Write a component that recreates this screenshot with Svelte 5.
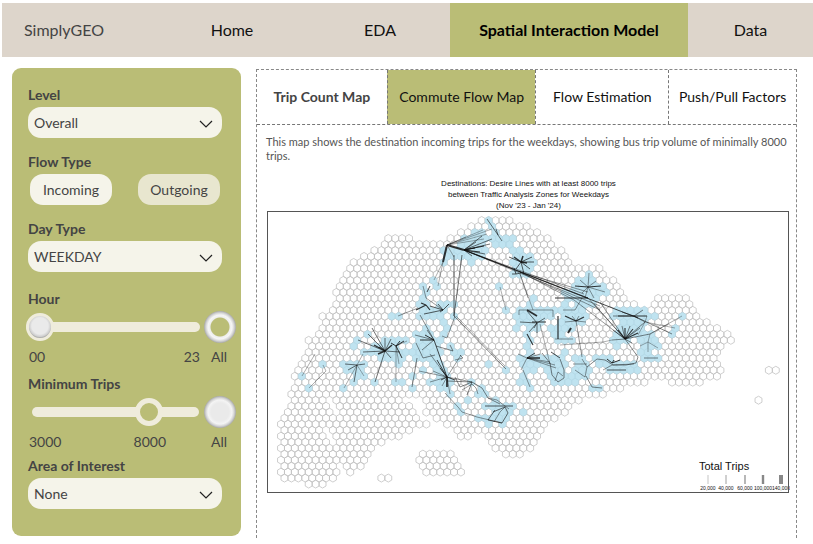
<script>
  const pitch = 6.92;
  const rowGap = 5.99;
  const originX = 481.7;
  const originY = 220.5;

  // For each row: start and end of every run of zones, in map units.
  const zones = [
    [482, 509], [471, 527], [461, 537], [389, 409, 451, 547], [385, 551], [375, 558],
    [365, 565], [354, 568], [351, 599], [347, 603], [344, 613], [340, 616], [337, 620],
    [340, 627, 656, 685], [337, 637, 653, 689], [333, 692], [323, 696], [326, 706],
    [323, 716], [319, 727], [309, 730], [312, 720], [309, 716], [306, 713], [302, 716],
    [299, 720, 768, 775], [295, 716], [299, 644, 671, 699], [295, 620], [292, 603],
    [295, 323, 337, 400, 427, 579, 757, 757], [292, 326, 340, 406, 430, 568],
    [289, 330, 344, 413, 427, 565], [285, 333, 340, 416, 437, 554], [282, 423, 447, 544],
    [285, 320, 333, 410, 457, 540], [282, 323, 333, 402, 461, 468, 489, 537],
    [285, 326, 337, 382, 492, 534], [282, 326, 337, 372, 496, 530],
    [285, 330, 340, 368, 423, 451, 506, 520], [282, 333, 344, 364, 420, 455],
    [285, 330, 344, 361, 423, 458], [282, 337, 351, 351, 427, 461],
    [285, 333, 381, 389], [309, 323]
  ];
  const busy = [
    [489, 489], [492, 492], [475, 482, 493, 496], [464, 485, 489, 503, 513, 513],
    [460, 482, 494, 507, 510, 510], [447, 485, 513, 520], [450, 483, 513, 530],
    [444, 444, 471, 471, 513, 533], [513, 527], [513, 527, 589, 589],
    [433, 433, 578, 593], [423, 423, 437, 437, 499, 499, 575, 603],
    [423, 427, 563, 570, 580, 606], [423, 423, 533, 533, 565, 593],
    [420, 427, 442, 454, 530, 530, 568, 568, 578, 593],
    [420, 447, 506, 506, 520, 540, 547, 582, 617, 643],
    [392, 399, 419, 437, 454, 454, 516, 550, 562, 585, 613, 655, 682, 682],
    [444, 444, 520, 543, 563, 583, 627, 647],
    [428, 428, 447, 447, 516, 516, 527, 537, 553, 570, 620, 643, 675, 675],
    [368, 368, 416, 430, 443, 443, 530, 530, 553, 563, 617, 650, 672, 672],
    [358, 358, 383, 407, 419, 437, 530, 533, 557, 572, 612, 630, 640, 655],
    [355, 355, 373, 397, 416, 437, 450, 450, 530, 530, 620, 620, 643, 658],
    [365, 403, 413, 440, 454, 461, 530, 530, 563, 563, 640, 647],
    [378, 400, 413, 437, 460, 460, 520, 540, 550, 562, 573, 582, 595, 610, 645, 658],
    [323, 323, 343, 365, 399, 399, 433, 440, 488, 488, 523, 530, 537, 563, 578, 587, 600, 633],
    [347, 360, 423, 423, 437, 443, 506, 506, 530, 535, 547, 562, 573, 588, 607, 637],
    [302, 302, 358, 365, 413, 413, 443, 450, 523, 523, 552, 563, 575, 583],
    [354, 354, 375, 375, 396, 403, 430, 430, 440, 450, 470, 470, 520, 527, 553, 560, 567, 575],
    [309, 309, 344, 344, 413, 413, 440, 447, 482, 482, 530, 530, 592, 599],
    [450, 450, 478, 485], [468, 468, 495, 495], [458, 458, 485, 513],
    [461, 461, 495, 510, 523, 523], [478, 478, 488, 507], [488, 488, 502, 502]
  ];

  function hexes(rows) {
    let d = '';
    rows.forEach((runs, r) => {
      const shift = r % 2 ? pitch / 2 : 0;
      const y = originY + r * rowGap;
      for (let i = 0; i < runs.length; i += 2) {
        const a = Math.round((runs[i] - originX - shift) / pitch);
        const b = Math.round((runs[i + 1] - originX - shift) / pitch);
        for (let k = a; k <= b; k++) {
          const x = originX + shift + k * pitch;
          d += `M${x.toFixed(2)} ${(y - 4).toFixed(2)}l3.46 2v4l-3.46 2l-3.46 -2v-4z`;
        }
      }
    });
    return d;
  }

  // Desire lines that fan out: hub x, hub y, stroke width, then the far ends.
  const fans = [
    [464, 250, 2, [447, 245]],
    [447, 245, 2, [443, 262]],
    [464, 250, 1, [475, 248, 484, 246, 480, 252]],
    [464, 250, 0.7, [492, 239, 490, 244, 485, 254, 482, 236, 472, 256, 476, 242]],
    [447, 245, 0.4, [466, 237, 483, 230, 492, 229, 487, 234, 454, 257, 484, 239]],
    [498, 235, 0.7, [487, 219, 502, 241, 496, 229]],
    [521, 262, 1.5, [514, 257, 523, 256, 527, 263]],
    [521, 262, 0.8, [534, 262, 516, 269, 530, 269, 524, 274, 509, 257, 532, 257]],
    [516, 274, 0.8, [514, 268, 521, 273, 512, 274]],
    [464, 250, 0.9, [588, 298, 638, 318]],
    [464, 250, 0.5, [600, 306, 584, 294]],
    [625, 339, 0.5, [588, 298, 594, 304, 574, 300, 600, 302]],
    [520, 272, 0.5, [588, 292, 600, 310, 574, 300]],
    [520, 274, 0.4, [528, 298, 533, 310]],
    [454, 316, 0.7, [454, 255, 462, 255]],
    [454, 316, 0.6, [506, 369]],
    [456, 316, 0.4, [505, 366]],
    [443, 262, 0.4, [434, 280, 438, 286]],
    [426, 305, 1.2, [416, 310, 421, 303, 430, 310]],
    [443, 310, 0.8, [430, 306, 438, 304, 449, 304, 424, 314, 440, 312]],
    [426, 298, 0.5, [423, 286, 443, 310]],
    [427, 292, 0.9, [430, 286]],
    [398, 316, 0.5, [418, 308]],
    [385, 351, 1.4, [374, 345, 379, 347, 392, 345, 378, 354]],
    [385, 351, 0.7, [358, 340, 375, 382, 385, 338, 391, 339, 368, 334, 363, 352, 400, 352, 391, 358, 372, 328]],
    [396, 346, 1, [404, 341, 391, 343, 402, 358, 400, 341]],
    [396, 346, 0.4, [396, 382, 399, 364, 407, 341]],
    [357, 365, 0.7, [345, 364, 365, 364, 348, 370, 354, 382]],
    [357, 365, 0.4, [344, 388, 364, 376, 363, 354]],
    [447, 377, 1.8, [447, 387]],
    [447, 377, 0.9, [434, 340, 437, 360, 441, 380, 440, 368, 455, 380]],
    [447, 377, 0.5, [461, 355, 450, 394, 430, 382, 433, 371, 442, 386, 430, 354, 472, 382, 419, 371]],
    [434, 340, 1, [420, 340, 425, 335]],
    [434, 340, 0.6, [420, 315, 427, 330, 415, 335, 422, 350]],
    [527, 310, 1.6, [537, 316]],
    [537, 322, 1.2, [532, 322, 546, 322]],
    [537, 323, 0.7, [520, 322, 529, 332, 537, 333, 527, 311, 545, 318, 534, 328]],
    [533, 345, 1.1, [527, 334]],
    [527, 358, 1.6, [540, 358]],
    [527, 358, 0.9, [535, 353]],
    [527, 358, 0.5, [521, 370, 555, 365, 550, 362, 556, 368, 518, 354, 540, 354]],
    [558, 339, 1.2, [558, 316]],
    [568, 333, 2, [571, 328]],
    [576, 321, 1.2, [565, 316, 584, 317]],
    [576, 321, 0.5, [582, 357, 565, 322, 586, 322, 579, 316, 572, 316]],
    [588, 287, 1, [575, 286, 601, 286]],
    [588, 287, 0.5, [589, 273, 580, 280, 596, 281, 605, 292, 582, 293, 585, 298, 594, 298]],
    [588, 298, 1, [555, 298]],
    [625, 339, 1.1, [618, 330, 625, 328, 633, 329, 638, 333]],
    [625, 339, 0.6, [612, 340, 613, 330, 622, 326, 630, 326, 650, 334, 638, 357, 640, 328, 645, 322, 632, 343]],
    [634, 316, 1, [618, 316, 647, 316]],
    [634, 316, 0.6, [622, 312, 645, 322, 643, 310, 672, 334, 613, 316]],
    [645, 322, 0.4, [647, 316, 675, 328, 638, 335]],
    [650, 334, 0.4, [682, 316, 668, 324]],
    [612, 363, 1, [607, 359, 614, 360, 620, 360]],
    [607, 370, 0.8, [626, 370]],
    [648, 342, 0.4, [650, 334, 648, 352, 640, 346, 658, 348]]
  ];

  // Desire lines that run on from zone to zone: stroke width, then the points.
  const chains = [
    [0.5, '455 316 447 338 442 336'],
    [0.6, '416 343 423 358 435 355'],
    [0.6, '436 346 453 351 450 345'],
    [0.6, '417 358 415 370 412 387'],
    [0.5, '460 355 463 358 455 360'],
    [0.6, '447 381 472 382 460 387 455 377'],
    [0.6, '467 395 472 382 482 388 488 398 500 404'],
    [0.5, '462 390 472 384 476 388 478 394'],
    [0.5, '445 393 458 407 462 412 477 417 502 423'],
    [0.8, '485 406 513 406'],
    [0.7, '493 412 505 407 508 413 502 423 488 420 495 410'],
    [0.5, '505 407 500 412 494 422'],
    [0.5, '488 398 497 400 509 409'],
    [0.4, '500 287 506 310'],
    [0.5, '519 315 519 310 553 310 553 317'],
    [0.5, '555 339 573 339'],
    [0.5, '563 310 575 310 582 298'],
    [0.4, '560 345 603 342 612 340'],
    [0.4, '540 324 550 364'],
    [0.9, '551 352 560 358'],
    [0.6, '542 353 550 363 552 375 558 382 564 378 564 370 560 359'],
    [0.5, '555 381 558 372 563 376'],
    [0.5, '523 370 530 387'],
    [0.5, '582 359 587 367 585 377 575 370'],
    [0.6, '586 376 592 387 602 388'],
    [0.6, '587 367 597 359 605 360 613 365 626 365 636 363 638 357'],
    [0.5, '573 364 587 364'],
    [0.5, '603 370 612 365 634 364'],
    [0.6, '644 358 658 358'],
    [0.4, '302 376 315 354'],
    [0.4, '309 388 326 371 323 365']
  ];

  const lines = [
    ...fans.map(([x, y, w, ends]) => {
      let d = '';
      for (let i = 0; i < ends.length; i += 2) d += `M${x} ${y}L${ends[i]} ${ends[i + 1]}`;
      return { d, w };
    }),
    ...chains.map(([w, points]) => ({ d: 'M' + points, w }))
  ];

  const legend = [
    { x: 708, w: 0.5, label: '20,000' },
    { x: 726, w: 0.8, label: '40,000' },
    { x: 745, w: 1.2, label: '60,000' },
    { x: 763, w: 2.4, label: '100,000' },
    { x: 781, w: 4, label: '140,000' }
  ];

  let hour = $state(0);
  let trips = $state(8000);
  let direction = $state('Incoming');
</script>

{#snippet chevron()}
  <svg class="chevron" viewBox="0 0 14 8" aria-hidden="true"><path d="M1 1l6 6 6-6" /></svg>
{/snippet}

<div class="page">
  <header>
    <a class="brand" href="#top">SimplyGEO</a>
    <a href="#home">Home</a>
    <a href="#eda">EDA</a>
    <a class="current" href="#model">Spatial Interaction Model</a>
    <a href="#data">Data</a>
  </header>

  <div class="body">
    <aside>
      <div class="field">
        <label for="level">Level</label>
        <div class="pick">
          <select id="level"><option>Overall</option></select>
          {@render chevron()}
        </div>
      </div>
      <div class="field" role="group" aria-labelledby="flow">
        <span class="label" id="flow">Flow Type</span>
        <div class="choices">
          {#each ['Incoming', 'Outgoing'] as name}
            <button class:on={direction === name} onclick={() => (direction = name)}>{name}</button>
          {/each}
        </div>
      </div>
      <div class="field">
        <label for="day">Day Type</label>
        <div class="pick">
          <select id="day"><option>WEEKDAY</option></select>
          {@render chevron()}
        </div>
      </div>
      <div class="field hour">
        <label for="hour">Hour</label>
        <div class="range">
          <input id="hour" class="ball" type="range" min="0" max="23" bind:value={hour} />
          <input id="all-hours" type="checkbox" />
        </div>
        <div class="scale">
          <span>00</span><span>23</span><label for="all-hours">All</label>
        </div>
      </div>
      <div class="field trips">
        <label for="trips">Minimum Trips</label>
        <div class="range">
          <input id="trips" class="ring" type="range" min="3000" max="9750" step="50" bind:value={trips} />
          <input id="all-trips" type="checkbox" checked />
        </div>
        <div class="scale">
          <span>3000</span><span class="value">{trips}</span><label for="all-trips">All</label>
        </div>
      </div>
      <div class="field area">
        <label for="area">Area of Interest</label>
        <div class="pick">
          <select id="area"><option>None</option></select>
          {@render chevron()}
        </div>
      </div>
    </aside>

    <main>
      <nav>
        <button class="strong">Trip Count Map</button>
        <button class="active">Commute Flow Map</button>
        <button>Flow Estimation</button>
        <button>Push/Pull Factors</button>
      </nav>
      <p>This map shows the destination incoming trips for the weekdays, showing bus trip volume of minimally 8000 trips.</p>
      <figure>
        <figcaption>
          Destinations: Desire Lines with at least 8000 trips<br />
          between Traffic Analysis Zones for Weekdays<br />
          (Nov '23 - Jan '24)
        </figcaption>
        <svg viewBox="267 211 523 283" role="img" aria-label="Commute flow map">
          <path class="zone" d={hexes(zones)} />
          <path class="busy" d={hexes(busy)} />
          {#each lines as line}
            <path class="flow" d={line.d} stroke-width={line.w} />
          {/each}
          <text class="total" x="699" y="470">Total Trips</text>
          {#each legend as item}
            <path class="key" d="M{item.x} 475v9" stroke-width={item.w} />
            <text class="tick" x={item.x} y="490">{item.label}</text>
          {/each}
          <rect class="frame" x="267.5" y="211.5" width="521" height="281" />
        </svg>
      </figure>
    </main>
  </div>
</div>

<style>
  :global(body) {
    margin: 0;
    background: #fff;
  }
  .page {
    font-family: Lato, 'Liberation Sans', sans-serif;
    color: #444;
    font-size: 14px;
    line-height: 20px;
  }
  header {
    display: grid;
    grid-template-columns: 152fr 156fr 140fr 238fr 125fr;
    height: 54px;
    margin: 3px 0 11px 2px;
    background: #ddd5cb;
  }
  header a {
    display: flex;
    align-items: center;
    justify-content: center;
    color: #111;
    font-size: 16px;
    text-decoration: none;
  }
  header .brand {
    justify-content: flex-start;
    padding-left: 22px;
    color: #444;
  }
  header .current {
    background: #babd76;
    color: #000;
    font-weight: 700;
  }
  .body {
    display: grid;
    grid-template-columns: 229px 1fr;
    gap: 15px;
    padding: 0 16px 0 12px;
  }
  aside {
    align-self: start;
    box-sizing: border-box;
    padding: 17px 5px 27px 16px;
    border-radius: 9px;
    background: #babd76;
  }
  .field {
    margin-bottom: 14px;
  }
  .field > label,
  .label {
    display: block;
    margin-bottom: 2px;
    font-weight: 700;
  }
  .hour {
    margin: 17px 0 7px;
  }
  .trips {
    margin-bottom: 4px;
  }
  .area {
    margin-bottom: 0;
  }
  .pick {
    position: relative;
    width: 194px;
  }
  select {
    appearance: none;
    display: block;
    width: 100%;
    height: 31px;
    padding: 0 6px;
    border: 0;
    border-radius: 13px;
    background: #f5f4ea;
    color: #444;
    font: inherit;
  }
  .chevron {
    position: absolute;
    top: 13px;
    right: 9px;
    width: 14px;
    height: 8px;
    fill: none;
    stroke: #222;
    stroke-width: 1.2;
    pointer-events: none;
  }
  .choices {
    display: flex;
    justify-content: space-between;
    width: 190px;
    padding-left: 2px;
  }
  .choices button {
    width: 82px;
    height: 31px;
    padding: 0;
    border: 0;
    border-radius: 13px;
    background: #e8e6cf;
    color: #444;
    font: inherit;
  }
  .choices .on {
    background: #f5f4ea;
  }
  .range {
    display: flex;
    align-items: center;
    justify-content: space-between;
    height: 32px;
  }
  input {
    appearance: none;
    margin: 0;
  }
  input[type='range'] {
    height: 30px;
    background: none;
  }
  .ball {
    width: 174px;
    margin-left: -2px;
  }
  .ring {
    width: 167px;
    margin-left: 4px;
  }
  input[type='range']::-webkit-slider-runnable-track {
    height: 10px;
    border-radius: 5px;
    background: #efecdc;
  }
  input[type='range']::-webkit-slider-thumb {
    appearance: none;
    box-sizing: border-box;
    width: 28px;
    height: 28px;
    margin-top: -9px;
    border: 3px solid #efecdc;
    border-radius: 50%;
    background: radial-gradient(circle at 50% 45%, #eaeaea 50%, #cfcfcf 65%, #999 75%);
  }
  input.ring::-webkit-slider-thumb {
    border-width: 5px;
    background: #babd76;
  }
  input[type='checkbox'] {
    width: 32px;
    height: 32px;
    border-radius: 50%;
    background: radial-gradient(circle, #babd76 9px, #eee 10px, #f6f6f6 12px, #d6d6d6 14px, #a9a9a9 16px);
  }
  input[type='checkbox']:checked {
    background: radial-gradient(circle, #eaeaea 9px, #f4f4f4 12px, #d6d6d6 14px, #a9a9a9 16px);
  }
  .scale {
    display: grid;
    grid-template-columns: 1fr auto 36px;
    margin-top: 4px;
    padding-left: 1px;
  }
  .scale label {
    padding-left: 11px;
  }
  .scale .value {
    margin-right: 34px;
  }
  main {
    margin-top: 1px;
    border: 1px dashed #888;
    border-bottom: 0;
  }
  nav {
    display: grid;
    grid-template-columns: 130fr 149fr 133fr 128fr;
    border-bottom: 1px dashed #777;
  }
  nav button {
    height: 54px;
    padding: 0;
    border: 0;
    border-left: 1px dashed #777;
    background: #fff;
    color: #111;
    font: inherit;
    white-space: nowrap;
  }
  nav .strong {
    border-left: 0;
    color: #444;
    font-weight: 700;
  }
  nav .active {
    background: #babd76;
  }
  p {
    margin: 10px 8px 0 9px;
    color: #555;
    font-size: 11px;
    line-height: 14px;
  }
  figure {
    margin: 15px 6px 0 10px;
  }
  figcaption {
    color: #111;
    font: 8px/11px 'Liberation Sans', Arial, sans-serif;
    text-align: center;
  }
  figure svg {
    display: block;
    width: 100%;
    padding-bottom: 44px;
  }
  .zone {
    fill: none;
    stroke: #c2c2c2;
    stroke-width: 0.8;
  }
  .busy {
    fill: #bfe3f0;
    stroke: #b3d8e6;
    stroke-width: 0.6;
  }
  .flow {
    fill: none;
    stroke: #111;
    stroke-opacity: 0.85;
  }
  .frame {
    fill: none;
    stroke: #555;
  }
  .key {
    stroke: #888;
  }
  text {
    fill: #111;
    font-family: 'Liberation Sans', Arial, sans-serif;
  }
  .total {
    font-size: 11px;
  }
  .tick {
    font-size: 5px;
    text-anchor: middle;
  }
</style>
